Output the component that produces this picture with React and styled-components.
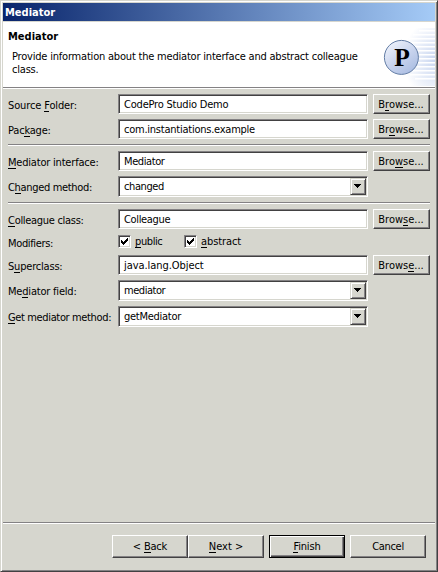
import React from 'react';
import styled, { createGlobalStyle } from 'styled-components';

const face = '#d6d6ce';
const gray = '#848284';
const dark = '#424142';

const Global = createGlobalStyle`
  * { box-sizing: border-box; }
  body { margin: 0; background: ${face}; }
  button, input { font: inherit; }
`;

const Dialog = styled.div`
  width: 438px;
  height: 572px;
  padding: 2px 2px 0 2px;
  display: flex;
  flex-direction: column;
  background: ${face};
  border: 1px solid ${face};
  border-right-color: ${dark};
  border-bottom-color: ${dark};
  box-shadow: inset 1px 1px 0 #fff, inset -1px -1px 0 ${gray};
  color: #000;
  font: 11px/13px 'DejaVu Sans Condensed', 'DejaVu Sans', sans-serif;
  font-stretch: condensed;
  overflow: hidden;
`;

const TitleBar = styled.div`
  height: 18px;
  flex: none;
  margin-bottom: 1px;
  padding: 3px 0 0 2px;
  background: linear-gradient(90deg, #08246b, #a5cbf7);
  color: #fff;
  font-weight: bold;
`;

const Header = styled.header`
  height: 67px;
  flex: none;
  display: flex;
  justify-content: space-between;
  background: #fff;
  border-bottom: 1px solid #fff;
  box-shadow: inset 0 -1px 0 ${gray};
`;

const Heading = styled.div`
  padding: 8px 0 0 5px;
  white-space: nowrap;
`;

const PageTitle = styled.h1`
  margin: 0 0 7px;
  font-size: 11px;
  line-height: 13px;
`;

const Description = styled.p`
  margin: 0 0 0 4px;
  letter-spacing: ${p => p.$spacing || '0'};
`;

const Banner = styled.svg`
  width: 60px;
  height: 65px;
  flex: none;
`;

const Form = styled.main`
  flex: 1;
  padding: 5px 5px 0;
  display: flex;
  flex-direction: column;
  gap: 5px;
`;

const Row = styled.div`
  flex: none;
  display: grid;
  grid-template-columns: 110px 250px 57px;
  height: ${p => p.$height || 20}px;
`;

const Label = styled.label`
  padding-top: ${p => p.$top ?? 5}px;
  white-space: nowrap;
  letter-spacing: ${p => p.$spacing || '0'};
`;

const Mnemonic = styled.span`
  box-shadow: 0 -1px 0 #000 inset;
`;

const Field = styled.div`
  display: flex;
  justify-content: space-between;
  height: 100%;
  background: #fff;
  border: 1px solid;
  border-color: ${gray} #fff #fff ${gray};
  box-shadow: inset 1px 1px 0 ${dark}, inset -1px -1px 0 ${face};
  padding: 1px;
`;

const Value = styled.span`
  padding: 2px 0 0 4px;
  white-space: nowrap;
  letter-spacing: ${p => p.$spacing || '0'};
`;

const Button = styled.button`
  width: ${p => p.$width || 57}px;
  height: ${p => p.$height || 20}px;
  margin: 0 0 0 ${p => p.$left || 0}px;
  padding: ${p => p.$top ?? 3}px 0 0;
  display: flex;
  justify-content: center;
  align-items: flex-start;
  border: 1px solid;
  border-color: ${p => (p.$primary ? '#000' : `#fff ${dark} ${dark} #fff`)};
  border-radius: 0;
  background: ${face};
  box-shadow: ${p => (p.$primary
    ? `inset 1px 1px 0 #fff, inset -1px -1px 0 ${dark}, inset -2px -2px 0 ${gray}`
    : `inset -1px -1px 0 ${gray}`)};
  color: #000;
  white-space: pre;
  letter-spacing: ${p => p.$spacing || '0'};
`;

const BrowseButton = styled(Button)`
  margin-left: 5px;
  padding-right: 1px;
`;

const Drop = styled.button`
  width: 16px;
  height: 17px;
  margin: 0;
  padding: 0;
  flex: none;
  display: flex;
  border: 1px solid;
  border-color: ${face} ${dark} ${dark} ${face};
  background: ${face};
  box-shadow: inset 1px 1px 0 #fff, inset -1px -1px 0 ${gray};
`;

const Rule = styled.div`
  height: 2px;
  flex: none;
  width: ${p => p.$width || 422}px;
  background: linear-gradient(${gray} 50%, #fff 50%);
`;

const Checks = styled.div`
  display: flex;
  padding-top: 1px;
`;

const Check = styled.label`
  display: flex;
  width: 66px;
  gap: 4px;
  line-height: 14px;
  white-space: nowrap;
  letter-spacing: ${p => p.$spacing || '0'};
`;

const Box = styled.span`
  width: 13px;
  height: 13px;
  flex: none;
  background: #fff;
  border: 1px solid;
  border-color: ${gray} #fff #fff ${gray};
  box-shadow: inset 1px 1px 0 ${dark}, inset -1px -1px 0 ${face};
  display: flex;
`;

const Footer = styled.footer`
  height: 47px;
  flex: none;
  display: flex;
  padding: 11px 0 0 109px;
`;

const Marked = ({ text }) => {
  const [before, rest] = text.split('&');
  if (rest === undefined) return <span>{text}</span>;
  return <span>{before}<Mnemonic>{rest[0]}</Mnemonic>{rest.slice(1)}</span>;
};

const Arrow = () => (
  <svg width="14" height="15" shapeRendering="crispEdges">
    <path d="M3 5h7v1h-1v1h-1v1h-1v1h-1v-1h-1v-1h-1v-1h-1z" />
  </svg>
);

const Tick = () => (
  <svg width="11" height="11" shapeRendering="crispEdges">
    <path d="M2 4h1v1h1v1h1v-1h1v-1h1v-1h1v-1h1v3h-1v1h-1v1h-1v1h-1v1h-1v-1h-1v-1h-1z" />
  </svg>
);

const FieldRow = ({ label, value, browse, combo, spacing, valueSpacing }) => (
  <Row $height={combo ? 21 : 20}>
    <Label $spacing={spacing}><Marked text={label} /></Label>
    <Field>
      <Value $spacing={valueSpacing}>{value}</Value>
      {combo && <Drop aria-label="Open list"><Arrow /></Drop>}
    </Field>
    {browse && <BrowseButton><Marked text={browse} /></BrowseButton>}
  </Row>
);

const lines = [
  [8, 44], [12, 38], [16, 34], [20, 30], [24, 28], [28, 26], [32, 25],
  [36, 25], [40, 26], [44, 28], [48, 31], [52, 35], [56, 40],
];

export default function App() {
  return (
    <>
      <Global />
      <Dialog>
        <TitleBar>Mediator</TitleBar>
        <Header>
          <Heading>
            <PageTitle>Mediator</PageTitle>
            <Description $spacing="-0.2px">Provide information about the mediator interface and abstract colleague</Description>
            <Description $spacing="-0.2px">class.</Description>
          </Heading>
          <Banner viewBox="0 0 60 65">
            <defs>
              <radialGradient id="glow" cx="1" cy=".55" r=".7">
                <stop offset="0" stopColor="#c9d6f0" />
                <stop offset="1" stopColor="#fff" />
              </radialGradient>
              <linearGradient id="ball" x1=".15" y1=".05" x2=".85" y2=".95">
                <stop offset="0" stopColor="#eef2fb" />
                <stop offset=".5" stopColor="#cad5ee" />
                <stop offset="1" stopColor="#a9bce2" />
              </linearGradient>
            </defs>
            <rect x="15" y="6" width="45" height="58" fill="url(#glow)" />
            {lines.map(([y, x]) => (
              <rect key={y} x={x} y={y} width={60 - x} height="1.5" fill="#fff" />
            ))}
            <circle cx="26.4" cy="35.4" r="17" fill="url(#ball)" stroke="#637da5" />
            <text x="27" y="44" textAnchor="middle" fontFamily="Liberation Serif, serif" fontWeight="bold" fontSize="25.5">P</text>
          </Banner>
        </Header>
        <Form>
          <FieldRow label="Source &Folder:" spacing="-0.13px" value="CodePro Studio Demo" valueSpacing="-0.2px" browse="B&rowse..." />
          <FieldRow label="Pac&kage:" spacing="-0.2px" value="com.instantiations.example" valueSpacing="-0.24px" browse="Br&owse..." />
          <Rule />
          <FieldRow label="&Mediator interface:" spacing="-0.2px" value="Mediator" valueSpacing="-0.4px" browse="Bro&wse..." />
          <FieldRow label="C&hanged method:" spacing="-0.33px" value="changed" valueSpacing="-0.4px" combo />
          <Rule />
          <FieldRow label="&Colleague class:" spacing="-0.3px" value="Colleague" valueSpacing="-0.35px" browse="Brow&se..." />
          <Row $height={16}>
            <Label $top={3} $spacing="-0.35px">Modifiers:</Label>
            <Checks>
              <Check $spacing="-0.4px"><Box><Tick /></Box><Marked text="&public" /></Check>
              <Check $spacing="-0.1px"><Box><Tick /></Box><Marked text="&abstract" /></Check>
            </Checks>
          </Row>
          <FieldRow label="S&uperclass:" spacing="-0.2px" value="java.lang.Object" valueSpacing="-0.06px" browse="Brows&e..." />
          <FieldRow label="Me&diator field:" spacing="-0.2px" value="mediator" valueSpacing="-0.45px" combo />
          <FieldRow label="&Get mediator method:" spacing="-0.36px" value="getMediator" valueSpacing="-0.27px" combo />
        </Form>
        <Rule $width={432} />
        <Footer>
          <Button $width={76} $height={23} $top={4} $spacing="-0.2px"><Marked text="< &Back" /></Button>
          <Button $width={76} $height={23} $top={4}><Marked text="&Next >" /></Button>
          <Button $width={76} $height={23} $top={4} $left={5} $spacing="-0.15px" $primary><Marked text="&Finish" /></Button>
          <Button $width={76} $height={23} $top={4} $left={5} $spacing="-0.3px">Cancel</Button>
        </Footer>
      </Dialog>
    </>
  );
}
